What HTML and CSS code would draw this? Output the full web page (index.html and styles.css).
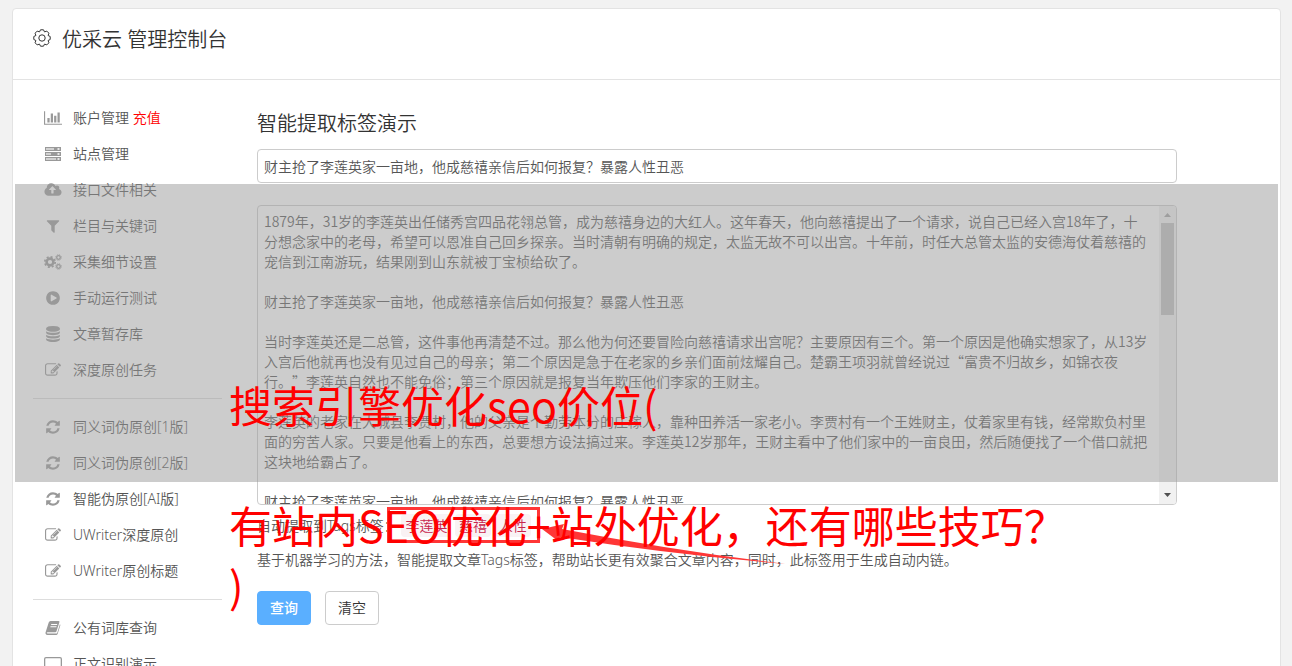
FILE: index.html
```html
<!DOCTYPE html>
<html lang="zh-CN">
<head>
  <meta charset="UTF-8" />
  <title>优采云 管理控制台</title>
  <link rel="stylesheet" href="styles.css">
</head>
<body>

<svg class="sprite" aria-hidden="true">
  <symbol id="i-chart" viewBox="0 0 2048 1792"><path d="M640 896v512h-256v-512h256zm384-512v1024h-256v-1024h256zm1024 1152v128h-2048v-1536h128v1408h1920zm-640-896v768h-256v-768h256zm384-384v1152h-256v-1152h256z"/></symbol>
  <symbol id="i-server" viewBox="0 0 18 16"><path fill-rule="evenodd" d="M1 1h16v4H1zM2 2v2h8V2zM13.500 2.200v1.600h2V2.200zM1 6h16v4H1zM2 7v2h5V7zM13.500 7.200v1.600h2V7.200zM1 11h16v4H1zM2 12v2h10v-2zM13.500 12.200v1.600h2v-1.600z"/><path opacity=".45" d="M2 2h8v2H2zM2 7h5v2H2zM2 12h10v2H2z"/></symbol>
  <symbol id="i-cloud" viewBox="0 0 1920 1792"><path d="M1280 864q0-14-9-23l-352-352q-9-9-23-9t-23 9l-351 351q-10 12-10 24 0 14 9 23t23 9h224v352q0 13 9.500 22.500t22.500 9.500h192q13 0 22.500-9.500t9.500-22.500v-352h224q13 0 22.500-9.500t9.500-22.500zm640 288q0 159-112.500 271.500t-271.500 112.500h-1088q-185 0-316.500-131.500t-131.500-316.500q0-130 70-240t188-165q-2-30-2-43 0-212 150-362t362-150q156 0 285.500 87t188.500 231q71-62 166-62 106 0 181 75t75 181q0 76-41 138 130 31 213.500 135.500t83.500 238.500z"/></symbol>
  <symbol id="i-filter" viewBox="0 0 1792 1792"><path d="M1595 295q17 41-14 70l-493 493v742q0 42-39 59-13 5-25 5-27 0-45-19l-256-256q-19-19-19-45v-486l-493-493q-31-29-14-70 17-39 59-39h1280q42 0 59 39z"/></symbol>
  <symbol id="i-cogs" viewBox="0 0 18 16">
    <g fill="none" stroke="currentColor">
      <circle cx="6" cy="8" r="3.400" stroke-width="2.600"/><circle cx="6" cy="8" r="5.200" stroke-width="1.700" stroke-dasharray="2.040 2.040"/>
      <circle cx="14.500" cy="3.500" r="1.800" stroke-width="1.300"/><circle cx="14.500" cy="3.500" r="2.800" stroke-width="1" stroke-dasharray="1.100 1.100"/>
      <circle cx="14.500" cy="12.500" r="1.800" stroke-width="1.300"/><circle cx="14.500" cy="12.500" r="2.800" stroke-width="1" stroke-dasharray="1.100 1.100"/>
    </g>
  </symbol>
  <symbol id="i-play" viewBox="0 0 1792 1792"><path d="M896 128q209 0 385.500 103t279.500 279.500 103 385.500-103 385.500-279.500 279.500-385.500 103-385.500-103-279.500-279.500-103-385.500 103-385.500 279.500-279.500 385.500-103zm384 823q32-18 32-55t-32-55l-544-320q-31-19-64-1-32 19-32 56v640q0 37 32 56 16 8 32 8 17 0 32-9z"/></symbol>
  <symbol id="i-db" viewBox="0 0 1792 1792"><path d="M896 768q237 0 443-43t325-127v170q0 69-103 128t-280 93.500-385 34.500-385-34.500-280-93.500-103-128v-170q119 84 325 127t443 43zm0 768q237 0 443-43t325-127v170q0 69-103 128t-280 93.500-385 34.500-385-34.500-280-93.500-103-128v-170q119 84 325 127t443 43zm0-384q237 0 443-43t325-127v170q0 69-103 128t-280 93.500-385 34.500-385-34.500-280-93.500-103-128v-170q119 84 325 127t443 43zm0-1152q208 0 385 34.500t280 93.500 103 128v128q0 69-103 128t-280 93.500-385 34.500-385-34.500-280-93.500-103-128v-128q0-69 103-128t280-93.500 385-34.500z"/></symbol>
  <symbol id="i-edit" viewBox="0 0 1792 1792"><path d="M888 1184l116-116-152-152-116 116v56h96v96h56zm440-720q-16-16-33 1l-350 350q-17 17-1 33t33-1l350-350q17-17 1-33zm80 594v190q0 119-84.500 203.500t-203.500 84.500h-832q-119 0-203.500-84.500t-84.500-203.500v-832q0-119 84.500-203.500t203.500-84.500h832q63 0 117 25 15 7 18 23 3 17-9 29l-49 49q-14 14-32 8-23-6-45-6h-832q-66 0-113 47t-47 113v832q0 66 47 113t113 47h832q66 0 113-47t47-113v-126q0-13 9-22l64-64q15-15 35-7t20 29zm-96-738l288 288-672 672h-288v-288zm444 132l-92 92-288-288 92-92q28-28 68-28t68 28l152 152q28 28 28 68t-28 68z"/></symbol>
  <symbol id="i-refresh" viewBox="0 0 1792 1792"><path d="M1639 1056q0 5-1 7-64 268-268 434.500t-478 166.500q-146 0-282.500-55t-243.500-157l-129 129q-19 19-45 19t-45-19-19-45v-448q0-26 19-45t45-19h448q26 0 45 19t19 45-19 45l-137 137q71 66 161 102t187 36q134 0 250-65t186-179q11-17 53-117 8-23 30-23h192q13 0 22.500 9.500t9.500 22.500zm25-800v448q0 26-19 45t-45 19h-448q-26 0-45-19t-19-45 19-45l138-138q-148-137-349-137-134 0-250 65t-186 179q-11 17-53 117-8 23-30 23h-199q-13 0-22.500-9.500t-9.500-22.500v-7q65-268 270-434.500t480-166.500q146 0 284 55.500t245 156.500l130-129q19-19 45-19t45 19 19 45z"/></symbol>
  <symbol id="i-book" viewBox="0 0 16 16"><path fill-rule="evenodd" d="M5.500 1h8q1.300 0 .9 1.300l-2.900 9q-.3.900-1.300.9H2.600q-.9 0-.9.600 0 .8 1.100.8h8.400q.7 0 1-.7l2.700-8.700q.7.400.4 1.300l-2.700 8.500Q12.200 15 11.200 15H2.800Q1.200 15.100.6 13.700.3 12.900.7 12l3-9.500Q4.200 1 5.500 1zm.8 3-.3 1h6l.3-1zm-.7 2.200-.3 1h6l.3-1z"/></symbol>
  <symbol id="i-laptop" viewBox="0 0 18 16"><path fill-rule="evenodd" d="M2 1h14q2 0 2 2v8q0 2-2 2H2q-2 0-2-2V3q0-2 2-2zm0 1.300q-.7 0-.7.700v8q0 .7.700.7h14q.7 0 .7-.7V3q0-.7-.7-.7zM5 14h8v1.300H5z"/></symbol>
</svg>

<div class="panel">
  <header class="panel-header">
    <svg class="gear" viewBox="0 0 18 18" aria-hidden="true">
      <path d="M17.200 7.500V10.500L15.100 11.500 15.900 13.800 13.800 15.900 11.500 15.100 10.500 17.200H7.500L6.500 15.100 4.200 15.900 2.100 13.800 2.900 11.500.8 10.500V7.500L2.900 6.500 2.100 4.200 4.200 2.100 6.500 2.900 7.500.8H10.500L11.500 2.900 13.800 2.100 15.900 4.200 15.100 6.500Z"/>
      <circle cx="9" cy="9" r="3.200"/>
    </svg>
    <h1>优采云 管理控制台</h1>
  </header>

  <div class="panel-body">
    <nav class="sidebar">
      <ul>
        <li><a href="#"><svg><use href="#i-chart"/></svg><span>账户管理 <em>充值</em></span></a></li>
        <li><a href="#"><svg><use href="#i-server"/></svg>站点管理</a></li>
        <li><a href="#"><svg><use href="#i-cloud"/></svg>接口文件相关</a></li>
        <li><a href="#"><svg><use href="#i-filter"/></svg>栏目与关键词</a></li>
        <li><a href="#"><svg><use href="#i-cogs"/></svg>采集细节设置</a></li>
        <li><a href="#"><svg><use href="#i-play"/></svg>手动运行测试</a></li>
        <li><a href="#"><svg><use href="#i-db"/></svg>文章暂存库</a></li>
        <li><a href="#"><svg><use href="#i-edit"/></svg>深度原创任务</a></li>
      </ul>
      <hr>
      <ul>
        <li><a href="#"><svg><use href="#i-refresh"/></svg>同义词伪原创[1版]</a></li>
        <li><a href="#"><svg><use href="#i-refresh"/></svg>同义词伪原创[2版]</a></li>
        <li><a href="#"><svg><use href="#i-refresh"/></svg>智能伪原创[AI版]</a></li>
        <li><a href="#"><svg><use href="#i-edit"/></svg>UWriter深度原创</a></li>
        <li><a href="#"><svg><use href="#i-edit"/></svg>UWriter原创标题</a></li>
      </ul>
      <hr>
      <ul>
        <li><a href="#"><svg><use href="#i-book"/></svg>公有词库查询</a></li>
        <li><a href="#"><svg><use href="#i-laptop"/></svg>正文识别演示</a></li>
      </ul>
    </nav>

    <main class="content">
      <h2>智能提取标签演示</h2>
      <form>
        <input type="text" class="field" aria-label="标题" value="财主抢了李莲英家一亩地，他成慈禧亲信后如何报复？暴露人性丑恶">
        <div class="editor">
          <textarea class="field" aria-label="正文">1879年，31岁的李莲英出任储秀宫四品花翎总管，成为慈禧身边的大红人。这年春天，他向慈禧提出了一个请求，说自己已经入宫18年了，十分想念家中的老母，希望可以恩准自己回乡探亲。当时清朝有明确的规定，太监无故不可以出宫。十年前，时任大总管太监的安德海仗着慈禧的宠信到江南游玩，结果刚到山东就被丁宝桢给砍了。

财主抢了李莲英家一亩地，他成慈禧亲信后如何报复？暴露人性丑恶

当时李莲英还是二总管，这件事他再清楚不过。那么他为何还要冒险向慈禧请求出宫呢？主要原因有三个。第一个原因是他确实想家了，从13岁入宫后他就再也没有见过自己的母亲；第二个原因是急于在老家的乡亲们面前炫耀自己。楚霸王项羽就曾经说过“富贵不归故乡，如锦衣夜行。”李莲英自然也不能免俗；第三个原因就是报复当年欺压他们李家的王财主。

李莲英的老家在大城县李贾村，他的父亲是个勤劳本分的庄稼人，靠种田养活一家老小。李贾村有一个王姓财主，仗着家里有钱，经常欺负村里面的穷苦人家。只要是他看上的东西，总要想方设法搞过来。李莲英12岁那年，王财主看中了他们家中的一亩良田，然后随便找了一个借口就把这块地给霸占了。

财主抢了李莲英家一亩地，他成慈禧亲信后如何报复？暴露人性丑恶</textarea>
          <div class="scrollbar" aria-hidden="true">
            <svg viewBox="0 0 17 17"><path fill="#a3a3a3" d="M5 11 8.500 7 12 11Z"/></svg>
            <div class="thumb"></div>
            <svg viewBox="0 0 17 17"><path fill="#505050" d="M5 6H12L8.500 10Z"/></svg>
          </div>
        </div>
        <p class="tags">自动提取到Tags标签： <code>李莲英</code> <code>慈禧</code> <code>人性</code></p>
        <p class="help">基于机器学习的方法，智能提取文章Tags标签，帮助站长更有效聚合文章内容，同时，此标签用于生成自动内链。</p>
        <div class="actions">
          <button type="button" class="btn btn-primary">查询</button>
          <button type="button" class="btn">清空</button>
        </div>
      </form>
    </main>
  </div>
</div>

<svg class="marker" viewBox="0 0 400 60" aria-hidden="true">
  <rect x="2.500" y="3.500" width="150" height="33"/>
  <path d="M156 24 178 19 176 24 Q290 46 400 59 Q290 50 174 32 L172 36Z"/>
</svg>
<div class="shade"></div>
<p class="caption">搜索引擎优化seo价位(

有站内SEO优化+站外优化，还有哪些技巧？
)</p>

</body>
</html>
```

FILE: styles.css
```css
* {
  box-sizing: border-box;
}

body {
  position: relative;
  height: 100vh;
  margin: 0;
  overflow: hidden;
  background-color: #f2f2f2;
  color: #555;
  font-family: "Noto Sans", "Noto Sans CJK SC", sans-serif;
  font-size: 14px;
  font-weight: 350;
  line-height: 20px;
  text-spacing-trim: space-all;
}

.sprite {
  display: none;
}

.panel {
  margin: 8px 11px 0 12px;
  background: white;
  border: 1px solid #e3e3e3;
  border-radius: 4px;
}

.panel-header {
  display: flex;
  align-items: center;
  gap: 11px;
  height: 71px;
  padding: 0 20px 8px;
  border-bottom: 1px solid #e3e3e3;
}

.gear {
  width: 18px;
  height: 18px;
  margin-bottom: 4px;
  fill: none;
  stroke: #333;
  stroke-linejoin: round;
}

h1, h2 {
  margin: 0;
  color: #333;
  font-size: 20px;
  font-weight: 350;
  line-height: 30px;
}

.panel-body {
  display: flex;
  gap: 35px;
  padding: 20px 103px 0 20px;
}

.sidebar {
  flex: 0 0 189px;
}

.sidebar ul {
  margin: 0;
  padding: 0;
  list-style: none;
}

.sidebar a {
  display: flex;
  align-items: center;
  gap: 11px;
  height: 36px;
  padding-left: 11px;
  color: #555;
  text-decoration: none;
}

.sidebar svg {
  width: 18px;
  height: 16px;
  color: #999;
  fill: #999;
}

.sidebar em {
  color: red;
  font-style: normal;
}

.sidebar hr {
  height: 1px;
  margin: 10px 0;
  border: 0;
  background: #ddd;
}

.content {
  flex: 1;
  min-width: 0;
  padding-top: 9px;
}

.field {
  display: block;
  width: 100%;
  padding: 6px;
  border: 1px solid #ccc;
  border-radius: 4px;
  background: white;
  color: #555;
  font: inherit;
}

input.field {
  height: 34px;
  margin-top: 10px;
}

.editor {
  position: relative;
  margin-top: 22px;
}

textarea.field {
  height: 300px;
  padding: 5px 26px 5px 6px;
  overflow: hidden;
  font-family: "Noto Sans CJK SC", sans-serif;
  text-spacing-trim: space-all;
  resize: none;
}

/* always visible, laid over the right edge of the textarea */
.scrollbar {
  position: absolute;
  top: 1px;
  right: 1px;
  bottom: 1px;
  display: flex;
  flex-direction: column;
  width: 17px;
  border-radius: 0 3px 3px 0;
  background: #f1f1f1;
}

.scrollbar svg {
  width: 17px;
  height: 17px;
}

.scrollbar .thumb {
  height: 92px;
  margin: 0 2px auto;
  background: #c1c1c1;
}

p {
  margin: 0;
}

.tags {
  margin-top: 11px;
}

.tags code {
  padding: 2px 4px;
  border-radius: 4px;
  background: #f9f2f4;
  color: #c7254e;
  font-family: inherit;
}

.help {
  margin-top: 14px;
}

.actions {
  display: flex;
  gap: 14px;
  margin-top: 21px;
}

.btn {
  width: 54px;
  height: 34px;
  padding: 0;
  border: 1px solid #ccc;
  border-radius: 4px;
  background: white;
  color: #333;
  font: inherit;
  cursor: pointer;
}

.btn-primary {
  border-color: #5aafff;
  background: #5aafff;
  color: white;
  font-weight: 500;
}

/* notes drawn over the page */
.marker {
  position: absolute;
  top: 505px;
  left: 386px;
  width: 400px;
  height: 60px;
  fill: #ff3636;
}

.marker rect {
  fill: none;
  stroke: #ff3636;
  stroke-width: 3;
}

.shade {
  position: absolute;
  top: 184px;
  right: 14px;
  left: 15px;
  height: 298px;
  background: rgba(153, 153, 153, 0.5);
}

.caption {
  position: absolute;
  top: 374px;
  left: 229px;
  color: red;
  font-family: "Noto Sans CJK SC", sans-serif;
  font-size: 43px;
  font-weight: 400;
  line-height: 60px;
  white-space: pre;
}
```
